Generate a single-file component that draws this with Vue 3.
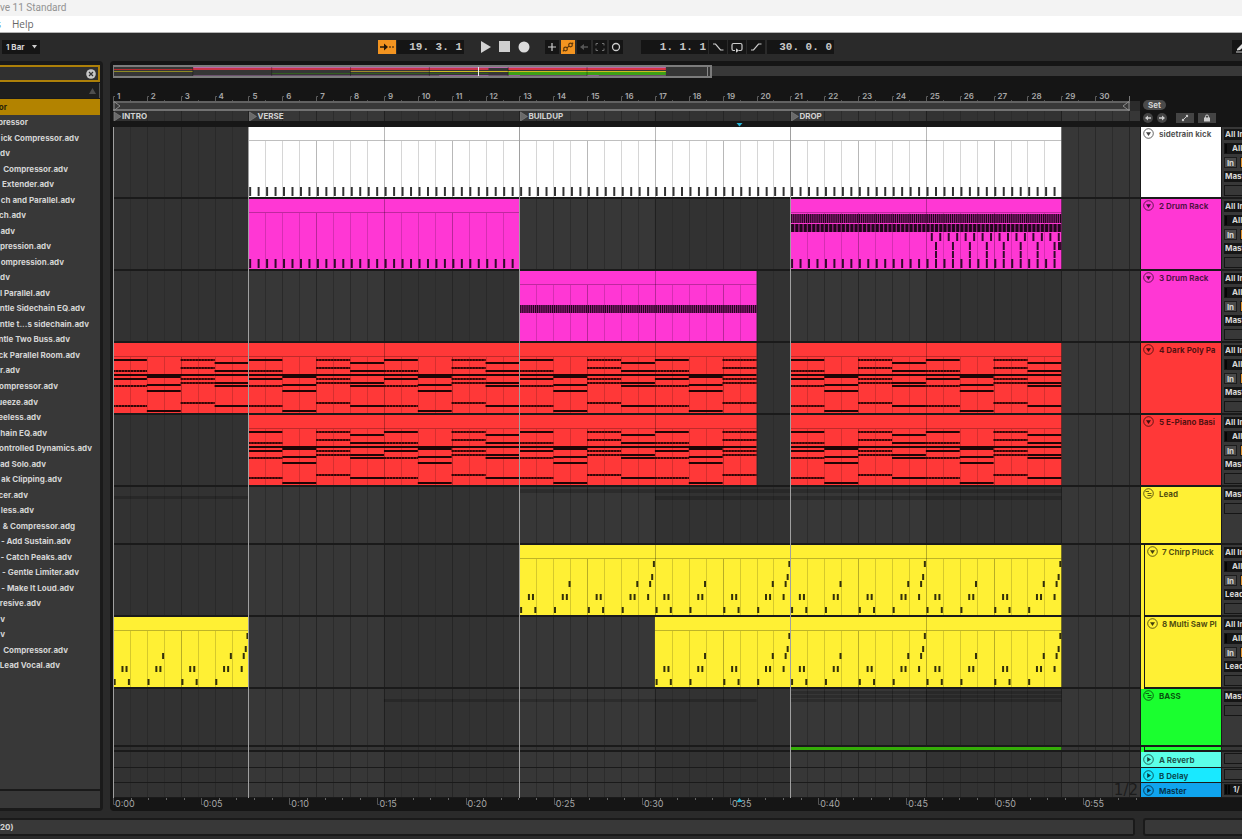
<script setup>
const BAR = 33.87
const SECOND = 17.63
const OVERVIEW_BAR = 19.71

const xOf = (bar) => (bar - 1) * BAR

const browserItems = [
  ['or', 7], ['pressor', 28], ['ick Compressor.adv', 79], ['dv', 10],
  ['Compressor.adv', 68], ['Extender.adv', 54], ['ch and Parallel.adv', 75],
  ['ch.adv', 26], ['adv', 15], ['pression.adv', 51], ['ompression.adv', 64],
  ['dv', 10], ['l Parallel.adv', 50], ['ntle Sidechain EQ.adv', 85],
  ['ntle t...s sidechain.adv', 89], ['ntle Two Buss.adv', 70], ['ck Parallel Room.adv', 80],
  ['r.adv', 20], ['ompressor.adv', 58], ['ueeze.adv', 38], ['eeless.adv', 41],
  ['hain EQ.adv', 47], ['ontrolled Dynamics.adv', 92], ['ad Solo.adv', 46],
  ['ak Clipping.adv', 62], ['cer.adv', 28], ['less.adv', 34], ['& Compressor.adg', 75],
  ['- Add Sustain.adv', 71], ['- Catch Peaks.adv', 72],
  ['- Gentle Limiter.adv', 79], ['- Make It Loud.adv', 74], ['resive.adv', 41],
  ['v', 5], ['v', 5], ['Compressor.adv', 68], ['Lead Vocal.adv', 60],
]

const barNumbers = Array.from({ length: 30 }, (_, i) => i + 1)
const halfBars = Array.from({ length: 61 }, (_, i) => i / 2 + 1)
const shadedBlocks = [5, 13, 21, 29]
const seconds = Array.from({ length: 59 }, (_, i) => i)
const timeMarks = Array.from({ length: 12 }, (_, i) => i * 5)
const timeLabel = (s) => '0:' + String(s).padStart(2, '0')

const locators = [
  { bar: 1, name: 'INTRO' },
  { bar: 5, name: 'VERSE' },
  { bar: 13, name: 'BUILDUP' },
  { bar: 21, name: 'DROP' },
]

const box = (bar, y, w, h) => `M${xOf(bar).toFixed(2)} ${y}h${w}v${h}h-${w}z`

function repeatNotes(from, to, step, offset, y, w, h) {
  let d = ''
  for (let b = from + offset; b < to - 0.01; b += step) d += box(b + 0.02, y, w, h)
  return d
}

const kicks = (from, to) => repeatNotes(from, to, 0.25, 0, 60, 2, 9)

function dropDrums() {
  return repeatNotes(21, 29, 0.0625, 0, 15, 1.2, 9) +
    repeatNotes(21, 29, 0.125, 0, 25, 3, 8) +
    kicks(21, 29) +
    repeatNotes(25, 29, 0.25, 0.125, 34, 2, 8) +
    repeatNotes(25, 29, 0.5, 0.25, 43, 2, 8) +
    repeatNotes(25, 29, 0.5, 0.25, 52, 2, 7) +
    repeatNotes(25, 29, 0.5, 0.25, 60, 2, 9) +
    box(28.9, 43, 3.4, 8)
}

const pluckPattern = [
  [0.02, 62], [0.44, 62], [1.02, 62], [2.02, 62], [2.44, 62], [3.02, 62],
  [0.25, 49], [0.37, 49], [1.25, 49], [1.37, 49], [2.25, 49], [2.37, 49], [3.25, 49], [3.37, 49], [3.77, 49],
  [1.45, 36], [3.45, 36], [3.83, 36], [3.89, 29], [3.94, 16],
]

function pluck(from, to) {
  let d = ''
  for (let b = from; b < to; b += 4) for (const [o, y] of pluckPattern) d += box(b + o, y, 2, 6)
  return d
}

const chordPattern = [
  { held: [17, 36], pulsed: [28, 43, 63] },
  { held: [33, 34, 42, 48, 68], pulsed: [] },
  { held: [], pulsed: [17, 25, 36, 40, 60] },
  { held: [20, 28, 40, 43, 63], pulsed: [] },
]

function chords(from, to, kind) {
  let d = ''
  for (let b = from; b < to; b++) {
    for (const y of chordPattern[(b - 1) % 4][kind]) {
      d += `M${xOf(b).toFixed(2)} ${y}h${BAR}`
    }
    if (kind === 'held') d += `M${xOf(b).toFixed(2)} 32h${BAR}`
  }
  return d
}

const drumClip = (from, to, notes, haze) => ({ from, to, notes, haze })
const chordClip = (from, to) => ({ from, to, held: chords(from, to, 'held'), pulsed: chords(from, to, 'pulsed') })

const tracks = [
  { name: 'sidetrain kick', tone: 'white', h: 70, out: 'Master', clips: [drumClip(5, 29, kicks(5, 29))] },
  {
    name: '2 Drum Rack', tone: 'pink', h: 70, out: 'Master',
    clips: [drumClip(5, 13, kicks(5, 13)), drumClip(21, 29, dropDrums(), [[15, 9], [25, 8]])],
  },
  {
    name: '3 Drum Rack', tone: 'pink', h: 70, out: 'Master',
    clips: [drumClip(13, 20, repeatNotes(13, 20, 0.0625, 0, 34, 1.2, 8), [[34, 8]])],
  },
  { name: '4 Dark Poly Pa', tone: 'red', h: 70, out: 'Master', clips: [chordClip(1, 20), chordClip(21, 29)] },
  { name: '5 E-Piano Basi', tone: 'red', h: 70, out: 'Master', clips: [chordClip(5, 20), chordClip(21, 29)] },
  { name: 'Lead', tone: 'yellow', h: 56, group: true, out: 'Master', clips: [], ghosts: [[1, 5, 9, 3], [13, 29, 2, 4], [17, 29, 9, 4]] },
  { name: '7 Chirp Pluck', tone: 'yellow', h: 70, child: true, out: 'Lead', clips: [drumClip(13, 29, pluck(13, 29))] },
  { name: '8 Multi Saw Pl', tone: 'yellow', h: 70, child: true, out: 'Lead', clips: [drumClip(1, 5, pluck(1, 5)), drumClip(17, 29, pluck(17, 29))] },
  { name: 'BASS', tone: 'green', h: 56, group: true, out: 'Master', clips: [], ghosts: [[9, 20, 10, 3], [21, 29, 2, 3], [21, 29, 6, 3], [21, 29, 10, 3]] },
  { name: '', tone: 'green', h: 3, child: true, sliver: true, clips: [], strip: [21, 29] },
  { name: 'A Reverb', tone: 'aqua', h: 15, folded: true, clips: [] },
  { name: 'B Delay', tone: 'cyan', h: 14, folded: true, clips: [] },
  { name: 'Master', tone: 'blue', h: 14, folded: true, master: true, clips: [] },
]

const inside = (clip) => halfBars.filter((b) => b > clip.from && b < clip.to)
const lineKind = (b) => ((b - 1) % 4 === 0 ? 'l4' : (b - 1) % 2 === 0 ? 'l2' : b % 1 === 0 ? 'l1' : 'lh')

const overviewSegments = [
  [5, 29, 0, 1, '#b568a8'], [1, 5, 2, 1, '#b42b2e'], [5, 20, 1, 2, '#c9354a'], [21, 29, 1, 2, '#d83444'],
  [1, 5, 4, 1, '#8f8a24'], [13, 17, 4, 1, '#a08a2a'], [17, 29, 4, 1, '#cdbb22'],
  [9, 20, 6, 1, '#345c22'], [21, 29, 5, 3, '#3da016'], [5, 29, 8, 1, '#6a506c'],
  [17.5, 20, 8, 1, '#93609a'], [21, 21.6, 8, 1, '#93609a'], [25, 25.6, 8, 1, '#93609a'],
]
</script>

<template>
  <div class="app">
    <header class="titlebar">ve 11 Standard</header>
    <nav class="menubar"><button class="menu-cut">s</button><button>Help</button></nav>

    <div class="toolbar">
      <div class="tool-left">
        <label class="quant">
          <select aria-label="Quantization"><option>1 Bar</option></select>
          <svg width="5" height="4"><path d="M0 0h5l-2.5 3.5z" fill="#ccc" /></svg>
        </label>
      </div>
      <div class="transport">
        <button class="tb on wide" aria-label="Follow">
          <svg width="14" height="10"><path d="M0 4.300h4V1.500L8 5 4 8.500V5.700H0z" fill="#24180a" /><path d="M9 5h5" stroke="#24180a" stroke-dasharray="2 1" /></svg>
        </button>
        <input class="pos" aria-label="Song position" value="19. 3. 1" />
        <div class="play-group">
          <button aria-label="Play"><svg width="12" height="14"><path d="M1 1l10 6-10 6z" fill="#d2d2d2" /></svg></button>
          <button aria-label="Stop"><svg width="12" height="12"><path d="M0 0h11v11H0z" fill="#cfcfcf" /></svg></button>
          <button aria-label="Record"><svg width="12" height="12"><circle cx="6" cy="6" r="5.500" fill="#dcdcdc" /></svg></button>
        </div>
        <div class="tb-group">
          <button class="tb" aria-label="Overdub"><svg width="10" height="10"><path d="M5 1v8M1 5h8" stroke="#ccc" stroke-width="1.200" /></svg></button>
          <button class="tb on" aria-label="Automation arm">
            <svg width="12" height="12" fill="none" stroke="#5c370b" stroke-width="1.200"><circle cx="3.500" cy="8" r="1.800" /><circle cx="8.500" cy="4" r="1.800" /><path d="M4.900 6.900l2.200-1.800M.8 10.200l1.300-1M9.900 2.900l1.300-1.100" /></svg>
          </button>
          <button class="tb" aria-label="Re-enable automation"><svg width="10" height="10"><path d="M5 2v6L1 5zM4 4.300h5v1.400H4z" fill="#555" /></svg></button>
          <button class="tb" aria-label="Capture"><svg width="10" height="10" fill="none" stroke="#707070"><path d="M1 3.500v-2h2M7 1.500h2v2M9 6.500v2H7M3 8.500H1v-2" /></svg></button>
          <button class="tb" aria-label="Session record"><svg width="10" height="10"><circle cx="5" cy="5" r="3.500" fill="none" stroke="#ccc" stroke-width="1.300" /></svg></button>
        </div>
        <div class="loop-group">
          <input class="pos" aria-label="Loop start" value="1. 1. 1" />
          <button class="tb wide" aria-label="Punch in"><svg width="12" height="10"><path d="M1 2h2.500l5 6H11.500" fill="none" stroke="#ccc" stroke-width="1.200" /></svg></button>
          <button class="tb wide" aria-label="Loop"><svg width="12" height="11" fill="none" stroke="#ccc" stroke-width="1.200"><path d="M4 8.500H2.500a1.500 1.500 0 0 1-1.500-1.500V3a1.500 1.500 0 0 1 1.500-1.500h7A1.500 1.500 0 0 1 11 3v4a1.500 1.500 0 0 1-1.500 1.500H8" /><path d="M5 6.200l3 2.300-3 2.300z" fill="#ccc" stroke="none" /></svg></button>
          <button class="tb wide" aria-label="Punch out"><svg width="12" height="10"><path d="M1 8h2.500l5-6H11.500" fill="none" stroke="#ccc" stroke-width="1.200" /></svg></button>
          <input class="pos" aria-label="Loop length" value="30. 0. 0" />
        </div>
      </div>
      <button class="tb pencil" aria-label="Draw mode"><svg width="14" height="12"><path d="M2 8l6-6 3 2-6 5-3 .5z" fill="#ddd" /><path d="M1 11h12" stroke="#ccc" /></svg></button>
    </div>

    <main class="main">
      <aside class="browser">
        <div class="search">
          <input aria-label="Search" />
          <button aria-label="Clear search"><svg width="10" height="10"><circle cx="5" cy="5" r="4.800" fill="#c8c8c8" /><path d="M3 3l4 4M7 3l-4 4" stroke="#333" stroke-width="1.200" /></svg></button>
        </div>
        <div class="list-head"><svg width="7" height="6"><path d="M0 6L3.500 0 7 6z" fill="#4e4e4e" /></svg></div>
        <ul class="list">
          <li v-for="(item, i) in browserItems" :key="i" :class="{ sel: i === 0 }">
            <span :style="{ width: item[1] + 'px' }">{{ item[0] }}</span>
          </li>
        </ul>
        <div class="preview"></div>
      </aside>

      <section class="arrange">
        <div class="overview">
          <div class="ov-rest"></div>
          <div class="ov-frame">
            <svg width="100%" height="9">
              <rect v-for="(s, i) in overviewSegments" :key="i" :x="(s[0] - 1) * OVERVIEW_BAR" :y="s[2]" :width="(s[1] - s[0]) * OVERVIEW_BAR" :height="s[3]" :fill="s[4]" />
              <path v-for="b in [5, 9, 13, 17, 21, 25]" :key="b" :d="`M${(b - 1) * OVERVIEW_BAR} 0v9`" stroke="#000" stroke-opacity=".3" />
              <path d="M364.500 0v9" stroke="#eee" />
              <path d="M593.500 0v9" stroke="#888" />
            </svg>
          </div>
        </div>

        <div class="rulers">
          <div class="ruler-canvas">
            <svg class="bars" width="100%" height="15">
              <g v-for="b in barNumbers" :key="b">
                <path :d="`M${Math.round(xOf(b)) + 2} 10.500h-1.500v4.500`" fill="none" stroke="#5c5c5c" />
                <path :d="`M${Math.round(xOf(b + 0.5)) + 0.5} 14v1`" stroke="#555" />
                <text :x="xOf(b) + 4" y="13">{{ b }}</text>
              </g>
              <path d="M1016.500 10v5" stroke="#777" />
            </svg>
            <div class="loopbar">
              <div class="loop">
                <svg width="8" height="10"><path d="M1 .5L7 5 1 9.500z" fill="none" stroke="#8c8c8c" /></svg>
                <svg width="8" height="10"><path d="M7 .5L1 5l6 4.500z" fill="none" stroke="#8c8c8c" /></svg>
              </div>
            </div>
            <svg class="loc-row" width="100%" height="10">
              <rect v-for="b in shadedBlocks" :key="b" :x="xOf(b)" y="0" :width="4 * BAR" height="10" fill="#373737" />
              <path v-for="b in halfBars" :key="b" :class="lineKind(b)" :d="`M${Math.round(xOf(b)) + 0.5} 0v10`" />
              <g v-for="l in locators" :key="l.name">
                <path :d="`M${xOf(l.bar) + 1} 1l7 4.500-7 4.500z`" fill="#6a6a6a" stroke="#8a8a8a" stroke-width=".6" />
                <text :x="xOf(l.bar) + 9" y="8">{{ l.name }}</text>
              </g>
            </svg>
            <svg class="insert" width="100%" height="6"><path d="M623.500 2h6l-3 3.500z" fill="#25b4d6" /></svg>
          </div>
          <div class="set-area">
            <button class="set">Set</button>
            <div class="set-row">
              <button class="round" aria-label="Previous locator"><svg width="10" height="10"><circle cx="5" cy="5" r="5" fill="#444" /><path d="M2 5l3-2.500V4.300h3v1.400H5V7.500z" fill="#ccc" /></svg></button>
              <button class="round" aria-label="Next locator"><svg width="10" height="10"><circle cx="5" cy="5" r="5" fill="#444" /><path d="M8 5L5 2.500V4.300H2v1.400h3V7.500z" fill="#ccc" /></svg></button>
              <button class="mini first" aria-label="Automation mode"><svg width="8" height="8"><circle cx="2" cy="6" r="1.200" fill="#ccc" /><circle cx="6" cy="2" r="1.200" fill="#ccc" /><path d="M2 6l4-4" stroke="#ccc" /></svg></button>
              <button class="mini" aria-label="Lock envelopes"><svg width="8" height="8"><path d="M1 3.500h6V7.500H1z" fill="#ccc" /><path d="M2.500 4V2.500a1.500 1.500 0 0 1 3 0V4" fill="none" stroke="#ccc" /></svg></button>
            </div>
          </div>
        </div>

        <div class="tracks">
          <div v-for="(t, ti) in tracks" :key="ti" class="track" :class="[t.tone, { folded: t.folded, child: t.child, sliver: t.sliver }]">
            <div class="lane">
              <svg width="100%" :height="t.h">
                <rect v-for="b in shadedBlocks" :key="b" :x="xOf(b)" y="0" :width="4 * BAR" :height="t.h" fill="#373737" />
                <path v-for="b in halfBars" :key="b" :class="lineKind(b)" :d="`M${Math.round(xOf(b)) + 0.5} 0v${t.h}`" />
                <rect v-for="(g, gi) in t.ghosts" :key="'g' + gi" :x="xOf(g[0])" :y="g[2]" :width="(g[1] - g[0]) * BAR" :height="g[3]" fill="#000" fill-opacity=".2" />
                <rect v-if="t.strip" :x="xOf(t.strip[0])" y="0" :width="(t.strip[1] - t.strip[0]) * BAR" height="3" fill="#35ad08" />
                <g v-for="c in t.clips" :key="c.from">
                  <rect class="clip" :x="xOf(c.from)" y="0" :width="(c.to - c.from) * BAR" :height="t.h" />
                  <path v-for="b in inside(c)" :key="b" class="cl" :class="lineKind(b)" :d="`M${Math.round(xOf(b)) + 0.5} ${(b - 1) % 4 === 0 ? 0 : 14}V${t.h}`" />
                  <path class="clip-edge" :d="`M${xOf(c.from)} 13.500H${xOf(c.to)}`" />
                  <rect v-for="(z, zi) in c.haze" :key="zi" :x="xOf(c.from)" :y="z[0]" :width="(c.to - c.from) * BAR" :height="z[1]" fill="#4a0540" fill-opacity=".5" />
                  <path v-if="c.notes" class="notes" :d="c.notes" />
                  <template v-if="c.held">
                    <path class="held" :d="c.held" />
                    <path class="pulse-base" :d="c.pulsed" />
                    <path class="pulse" :d="c.pulsed" />
                  </template>
                </g>
              </svg>
              <span v-if="t.master" class="zoomlevel">1/2</span>
            </div>
            <div class="head">
              <div class="head-body">
                <template v-if="!t.sliver">
                  <button class="fold" :aria-label="'Fold ' + t.name">
                    <svg width="11" height="11">
                      <circle cx="5.500" cy="5.500" r="4.800" />
                      <path v-if="t.group" d="M2.500 3.500h3.500M4.500 5.500h4M4.500 7.500h4" />
                      <path v-else-if="t.folded" class="solid" d="M4.200 3L8 5.500 4.200 8z" />
                      <path v-else class="solid" d="M3 4.200h5L5.500 8z" />
                    </svg>
                  </button>
                  <span class="name">{{ t.name }}</span>
                </template>
              </div>
            </div>
            <div class="io">
              <div v-if="!t.sliver" class="io-body">
                <template v-if="t.folded">
                  <div v-if="t.master" class="field meter"><i></i><i></i><span>1/</span></div>
                  <div v-else class="slot"></div>
                </template>
                <template v-else>
                  <template v-if="!t.group">
                    <select class="field" :aria-label="t.name + ' input'"><option>All Ins</option></select>
                    <label class="field meter"><i></i><select :aria-label="t.name + ' channel'"><option>All Channels</option></select></label>
                    <div class="monitor"><button>In</button><button class="auto" aria-label="Auto"></button></div>
                  </template>
                  <select class="field" :aria-label="t.name + ' output'"><option>{{ t.out }}</option></select>
                  <div class="slot"></div>
                </template>
              </div>
            </div>
          </div>
          <svg class="loc-lines" width="100%" height="100%">
            <rect v-for="l in locators" :key="l.bar" :x="Math.round(xOf(l.bar))" y="0" width="1" height="100%" fill="#a0a0a0" />
          </svg>
        </div>

        <svg class="time" width="100%" height="13">
          <path v-for="s in seconds" :key="s" :d="`M${Math.round(s * SECOND) + 0.5} 0v2`" stroke="#666" />
          <g v-for="s in timeMarks" :key="'t' + s">
            <path :d="`M${Math.round(s * SECOND) + 0.5} 0v6.500h2`" fill="none" stroke="#555" />
            <text :x="s * SECOND + 2" y="9">{{ timeLabel(s) }}</text>
          </g>
          <path d="M623.500 4h6l-3-4z" fill="#25b4d6" />
        </svg>
      </section>
    </main>

    <footer class="status">
      <div class="status-box">20)</div>
      <div class="status-box side"></div>
    </footer>
  </div>
</template>

<style>
body { margin: 0; background: #2a2a2a; }
</style>

<style scoped>
.app { min-height: 100vh; overflow: hidden; background: #2a2a2a; font-family: Inter, "Liberation Sans", sans-serif; font-size: 8px; font-weight: 700; color: #d4d4d4; }
.app * { box-sizing: border-box; }
svg { display: block; }
button, input, select { font: inherit; color: inherit; border: 0; padding: 0; margin: 0; background: none; border-radius: 0; outline: 0; appearance: none; }
button { display: flex; align-items: center; justify-content: center; }

.titlebar { height: 16px; background: #f3f3f3; color: #929292; font: 400 10px/15px Roboto, sans-serif; white-space: nowrap; }
.menubar { height: 17px; background: #fff; border-bottom: 1px solid #b5b5b5; display: flex; align-items: center; font: 400 10px/16px "Open Sans", sans-serif; color: #666; }
.menubar button + button { margin-left: 11px; }
.menubar .menu-cut { width: 1px; justify-content: flex-end; color: #4a90c8; }

.toolbar { height: 28px; display: grid; grid-template-columns: 378px 1fr 9px; align-items: center; }
.tool-left { display: flex; padding-left: 2px; }
.quant { width: 38px; height: 14px; background: #151515; display: flex; align-items: center; justify-content: space-between; padding: 0 3px 0 4px; }
.transport { display: flex; align-items: center; }
.tb { width: 14px; height: 14px; background: #151515; flex: none; }
.tb.wide { width: 18px; }
.tb.on { background: #f39420; }
.pos { width: 67px; height: 14px; margin-left: 1px; padding-right: 2px; background: #151515; font: 700 11px/14px "Liberation Mono", monospace; text-align: right; white-space: pre; color: #c8c8c8; }
.play-group { display: flex; gap: 7px; margin-left: 16px; align-items: center; }
.tb-group { display: flex; gap: 2px; margin-left: 15px; }
.loop-group { display: flex; gap: 1px; margin-left: 17px; }
.pencil { width: 20px; margin-left: -1px; }

.main { display: grid; grid-template-columns: 103px 1fr; column-gap: 7px; height: 750px; }
.browser { background: #1a1a1a; border-radius: 0 4px 4px 0; padding: 4px 3px 3px 0; display: flex; flex-direction: column; min-width: 0; }
.search { height: 17px; border: 2px solid #ad8009; border-left: 0; background: #303030; display: flex; align-items: center; padding-right: 2px; }
.search input { flex: 1; min-width: 0; }
.list-head { height: 15px; margin-top: 1px; background: #1e1e1e; border-right: 1px solid #555; display: flex; align-items: center; justify-content: flex-end; padding-right: 3px; }
.list { list-style: none; margin: 1px 0 0; padding: 0 0 116px; background: #383838; flex: 1; display: grid; grid-auto-rows: 1fr; }
.list li { display: flex; align-items: center; }
.list li.sel { background: #b38300; color: #2a2208; }
.list span { display: flex; justify-content: flex-end; white-space: nowrap; }
.preview { height: 17px; margin-top: 2px; background: #383838; }

.arrange { background: #151515; border-radius: 4px 0 0 4px; padding: 4px 0 0 3px; min-width: 0; overflow: hidden; }
.overview { display: grid; height: 13px; }
.overview > * { grid-area: 1 / 1; }
.ov-rest { background: #383838; height: 10px; margin-top: 1px; }
.ov-frame { width: 599px; border: 2px solid #7c7c7c; border-left-width: 1px; background: #363636; }

.rulers, .track { display: grid; grid-template-columns: minmax(0, 1fr) 81px 21px; }
.rulers { margin-top: 8px; grid-template-columns: minmax(0, 1fr) 102px; }
.bars text { fill: #a8a8a8; font-size: 8px; font-weight: 600; }
.loopbar { background: #2b2b2b; height: 10px; padding-right: 10px; }
.loop { height: 10px; border-top: 2px solid #626262; border-bottom: 2px solid #727272; background: #383838; display: flex; justify-content: space-between; align-items: center; }
.loc-row { background: #323232; }
.loc-row text { fill: #d2d2d2; font-size: 8px; font-weight: 700; }
.insert { background: #171717; }

.set-area { padding: 14px 0 0 3px; }
.set { width: 23px; height: 10px; border-radius: 5px; background: #4a4a4a; }
.set-row { display: flex; align-items: center; gap: 4px; margin-top: 3px; }
.mini { width: 18px; height: 10px; background: #444; }
.mini.first { margin-left: 5px; }

.tracks { position: relative; }
.loc-lines { position: absolute; inset: 0; pointer-events: none; }
.track { background: #1b1b1b; }
.lane, .io { border-bottom: 2px solid #1a1a1a; }
.lane { position: relative; background: #323232; overflow: hidden; }
.folded .lane, .folded .io { border-bottom-width: 1px; }
.lh { stroke: #2c2c2c; }
.l1 { stroke: #292929; }
.l2 { stroke: #252525; }
.l4 { stroke: #202020; }
.cl { stroke: #000; stroke-opacity: .16; }
.cl.l2, .cl.l4 { stroke-opacity: .28; }
.clip { fill: var(--c); }
.clip-edge { stroke: #000; stroke-opacity: .25; }
.notes { fill: #000; fill-opacity: .8; }
.held { fill: none; stroke: #200505; stroke-width: 1.8; }
.pulse-base { fill: none; stroke: #7c1414; stroke-width: 1.8; }
.pulse { fill: none; stroke: #300606; stroke-width: 1.8; stroke-dasharray: 2 1; }
.zoomlevel { position: absolute; right: 2px; bottom: -1px; font: 400 15px/15px "DejaVu Sans", sans-serif; color: #1c1c1c; }

.white { --c: #ffffff; }
.pink { --c: #ff37d4; }
.red { --c: #ff3838; }
.yellow { --c: #fff034; }
.green { --c: #1aff2f; }
.aqua { --c: #5cffe8; }
.cyan { --c: #19e9ff; }
.blue { --c: #10a4ee; }

.head { padding: 0 0 2px 1px; overflow: hidden; background: #1a1a1a; }
.folded .head { padding-bottom: 1px; }
.head-body { height: 100%; background: var(--c); color: rgba(0, 0, 0, .7); display: flex; align-items: flex-start; gap: 5px; padding: 1px 2px; }
.folded .head-body { padding: 2px 2px 0; }
.child .head { background: linear-gradient(var(--c), var(--c)) 1px 0 / 3px 100% no-repeat #1a1a1a; padding-left: 5px; }
.child .head-body { padding: 1px 1px 1px 2px; gap: 4px; }
.fold { flex: none; }
.fold svg { fill: none; stroke: rgba(0, 0, 0, .6); stroke-width: 1; }
.fold .solid { fill: rgba(0, 0, 0, .75); stroke: none; }
.name { white-space: nowrap; line-height: 12px; }

.io { margin-left: 1px; background: #383838; overflow: hidden; }
.io-body { width: 90px; padding: 2px 0 0 2px; display: flex; flex-direction: column; gap: 3px; }
.folded .io-body { padding-top: 1px; }
.field { width: 80px; height: 11px; background: #151515; line-height: 11px; padding-left: 1px; color: #d8d8d8; }
.meter { display: flex; align-items: center; gap: 1px; }
.meter i { width: 2px; height: 9px; background: #050505; }
.meter select { margin-left: 4px; }
.meter span { margin-left: 2px; }
.monitor { display: flex; gap: 3px; height: 11px; }
.monitor button { width: 13px; background: #4a4a4a; border: 1px solid #1c1c1c; }
.monitor .auto { width: 26px; background: #e0912c; }
.slot { width: 80px; height: 11px; border: 1px solid #151515; background: #383838; }

.time text { fill: #a8a8a8; font-size: 9px; font-weight: 400; }

.status { margin-top: 7px; display: grid; grid-template-columns: 1fr 99px; column-gap: 8px; }
.status-box { height: 18px; border: 2px solid #1a1a1a; border-left: 0; border-radius: 0 3px 3px 0; background: #383838; line-height: 14px; }
.status-box.side { border-left: 2px solid #1a1a1a; border-right: 0; border-radius: 3px 0 0 3px; }
</style>
